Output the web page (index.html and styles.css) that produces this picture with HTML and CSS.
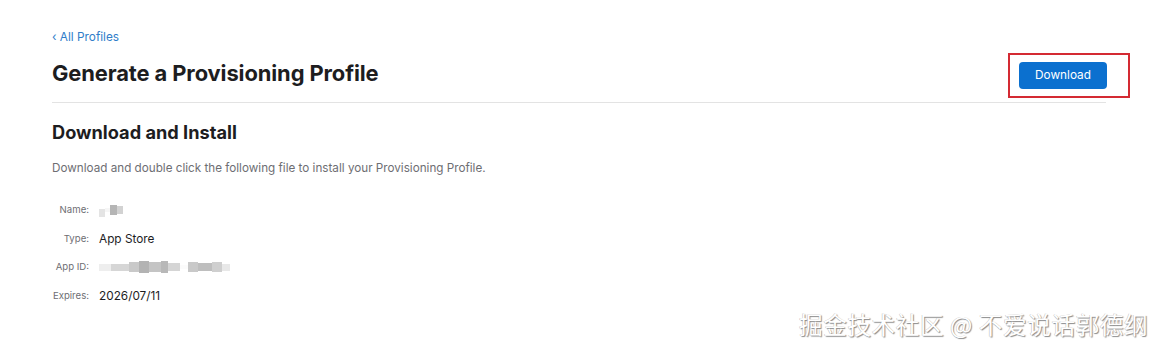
FILE: index.html
```html
<!DOCTYPE html>
<html>
<head>
<meta charset="utf-8">
<link rel="stylesheet" href="styles.css">
</head>
<body>
<div class="page">
  <a class="back" href="#">&#8249; All Profiles</a>
  <div class="header">
    <h1 class="title">Generate a Provisioning Profile</h1>
    <div class="highlight">
      <button class="btn">Download</button>
    </div>
  </div>
  <div class="divider"></div>
  <h2 class="subtitle">Download and Install</h2>
  <p class="desc">Download and double click the following file to install your Provisioning Profile.</p>
  <div class="details">
    <div class="label">Name:</div>
    <div class="value"><span class="blur">
      <i class="px" style="background:#e4e4e4;width:6px;height:8px;margin-top:5px"></i><i class="px" style="background:#f6f6f6;width:5px;height:4px"></i><i class="px" style="background:#b5b5b5;width:7px;height:10px"></i><i class="px" style="background:#d2d2d2;width:6px;height:8px"></i>
    </span></div>
    <div class="label">Type:</div>
    <div class="value">App Store</div>
    <div class="label">App ID:</div>
    <div class="value"><span class="blur">
      <i class="px" style="background:#eeeeee;width:12px;height:7px"></i><i class="px" style="background:#d6d6d6;width:18px;height:7px"></i><i class="px" style="background:#c9c9c9;width:10px;height:10px"></i><i class="px" style="background:#b3b3b3;width:10px;height:12px"></i><i class="px" style="background:#c4c4c4;width:12px;height:10px"></i><i class="px" style="background:#b8b8b8;width:7px;height:12px"></i><i class="px" style="background:#d5d5d5;width:12px;height:8px"></i><i class="px" style="background:#fbfbfb;width:8px;height:4px"></i><i class="px" style="background:#c9c9c9;width:10px;height:10px"></i><i class="px" style="background:#bebebe;width:14px;height:8px"></i><i class="px" style="background:#cfcfcf;width:10px;height:10px"></i><i class="px" style="background:#e8e8e8;width:8px;height:7px"></i>
    </span></div>
    <div class="label">Expires:</div>
    <div class="value">2026/07/11</div>
  </div>
</div>
<div class="watermark">掘金技术社区 @ 不爱说话郭德纲</div>
</body>
</html>
```
FILE: styles.css
```css
html, body {
  margin: 0;
  padding: 0;
  background: #ffffff;
}
body {
  font-family: Inter, "Noto Sans", "Liberation Sans", sans-serif;
  color: #1d1d1f;
  width: 1173px;
  height: 352px;
  overflow: hidden;
  position: relative;
}
.page {
  padding: 29px 0 0 52px;
  width: 1054px;
}
.back {
  display: block;
  font-size: 11.8px;
  line-height: 16px;
  color: #2f7dc9;
  text-decoration: none;
}
.header {
  display: flex;
  justify-content: space-between;
  align-items: center;
  height: 46px;
  margin-top: 7px;
}
.title {
  margin: 0 0 4px;
  font-size: 21.9px;
  font-weight: 700;
  letter-spacing: -0.1px;
  color: #1d1d1f;
  line-height: 26px;
}
.highlight {
  border: 2px solid #d42a33;
  width: 118px;
  height: 41px;
  display: flex;
  align-items: center;
  justify-content: center;
  margin-right: -24px;
  box-sizing: content-box;
}
.btn {
  width: 88px;
  height: 27px;
  background: #0b70cf;
  color: #ffffff;
  border: none;
  border-radius: 4px;
  font-family: Inter, "Noto Sans", sans-serif;
  font-size: 11.8px;
  padding: 0;
  margin-right: 12px;
}
.divider {
  height: 1px;
  background: #e3e3e3;
  margin-top: 4px;
}
.subtitle {
  margin: 17px 0 0;
  font-size: 18.2px;
  font-weight: 700;
  line-height: 24px;
  color: #1d1d1f;
}
.desc {
  margin: 16px 0 0;
  font-size: 11.7px;
  line-height: 16px;
  color: #6e6e73;
}
.details {
  display: grid;
  grid-template-columns: 37px auto;
  column-gap: 10px;
  row-gap: 12.7px;
  margin-top: 26px;
  align-items: center;
}
.label {
  font-size: 9.6px;
  color: #6e6e73;
  text-align: right;
  line-height: 16px;
}
.value {
  font-size: 11.8px;
  color: #1d1d1f;
  line-height: 16px;
  height: 16px;
}
.blur {
  display: inline-flex;
  align-items: center;
  height: 16px;
  vertical-align: top;
  filter: blur(0.6px);
}
.px {
  display: inline-block;
}
.watermark {
  position: absolute;
  left: 799px;
  top: 309px;
  font-family: "Noto Sans CJK SC", sans-serif;
  font-size: 23.6px;
  line-height: 30px;
  color: #ffffff;
  text-shadow: 1px 1px 1px #8a8a8a, -0.5px -0.5px 0.5px #bdbdbd;
  letter-spacing: 0.6px;
}
```
